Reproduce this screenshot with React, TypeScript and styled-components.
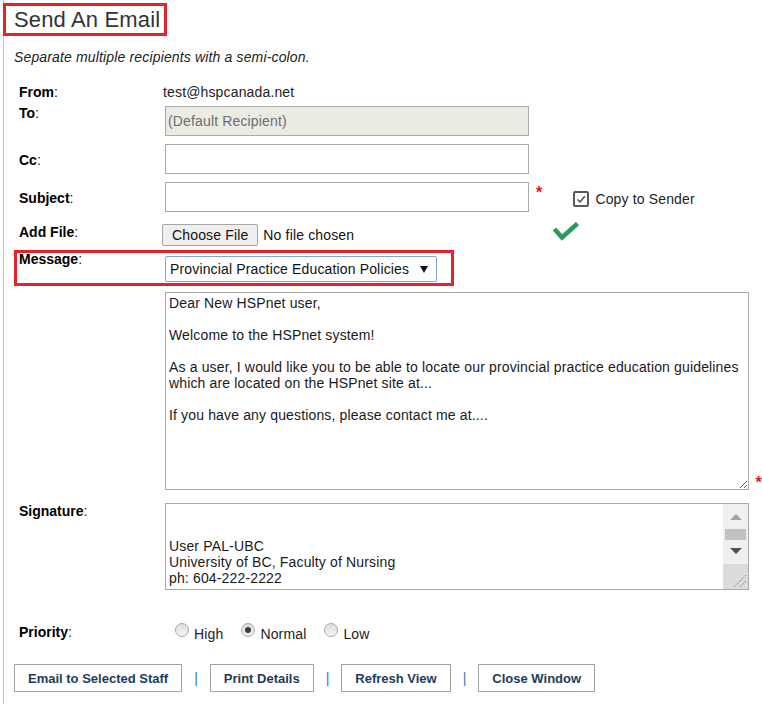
import React from "react";
import styled, { createGlobalStyle } from "styled-components";

const GlobalStyle = createGlobalStyle`
  html {
    min-height: 100%;
    background: linear-gradient(to right, #fff 3px, #c3c3c3 3px, #c3c3c3 4px, #fff 4px);
  }
  body {
    margin: 0;
    font-family: "Liberation Sans", Arial, sans-serif;
    font-size: 14px;
    letter-spacing: 0.15px;
    color: #111;
  }
`;

const MESSAGE = `Dear New HSPnet user,

Welcome to the HSPnet system!

As a user, I would like you to be able to locate our provincial practice education guidelines
which are located on the HSPnet site at...

If you have any questions, please contact me at....`;

const SIGNATURE = `

User PAL-UBC
University of BC, Faculty of Nursing
ph: 604-222-2222`;

export default function App() {
  return (
    <>
      <GlobalStyle />
      <Page>
        <TitleBox>Send An Email</TitleBox>
        <Note>Separate multiple recipients with a semi-colon.</Note>

        <Form>
          <Row $mt={0}>
            <Label>
              <b>From</b>:
            </Label>
            <Value>test@hspcanada.net</Value>
          </Row>

          <Row $mt={6}>
            <Label $mt={-1}>
              <b>To</b>:
            </Label>
            <TextInput $disabled readOnly value="(Default Recipient)" />
          </Row>

          <Row $mt={8}>
            <Label $mt={8}>
              <b>Cc</b>:
            </Label>
            <TextInput readOnly value="" />
          </Row>

          <Row $mt={8}>
            <Label $mt={8}>
              <b>Subject</b>:
            </Label>
            <TextInput readOnly value="" />
            <Required $ml={7} $mt={3}>*</Required>
            <CopyOption>
              <CheckBox>
                <svg width="12" height="12" viewBox="0 0 12 12">
                  <path d="M2.5 6.5 L5 9 L9.8 3.2" fill="none" stroke="#4a4a4a" strokeWidth="1.5" />
                </svg>
              </CheckBox>
              <span>Copy to Sender</span>
            </CopyOption>
          </Row>

          <Row $mt={12}>
            <Label>
              <b>Add File</b>:
            </Label>
            <FileGroup>
              <FileButton>Choose File</FileButton>
              <FileStatus>No file chosen</FileStatus>
            </FileGroup>
            <GreenCheck width="26" height="19" viewBox="0 0 26 19">
              <path d="M1.5 7 L9 15.5 L24.5 1.5" fill="none" stroke="#2c9a5b" strokeWidth="4.5" />
            </GreenCheck>
          </Row>

          <HighlightRow>
            <Label $mt={-2}>
              <b>Message</b>:
            </Label>
            <SelectBox>
              <span>Provincial Practice Education Policies</span>
              <svg width="8" height="7" viewBox="0 0 8 7">
                <path d="M0 0 H8 L4 7 Z" fill="#111" />
              </svg>
            </SelectBox>
          </HighlightRow>

          <Row $mt={6}>
            <Label />
            <MessageArea readOnly value={MESSAGE} />
            <Required $ml={7} $mt={0} $end>
              *
            </Required>
          </Row>

          <Row $mt={13}>
            <Label>
              <b>Signature</b>:
            </Label>
            <SigBox>
              <SigText>{SIGNATURE}</SigText>
              <ScrollColumn>
                <ScrollTrack>
                  <svg width="25" height="60" viewBox="0 0 25 60">
                    <path d="M7 16 L19 16 L13 10 Z" fill="#a3a3a3" />
                    <rect x="2" y="25" width="21" height="11" fill="#c1c1c1" />
                    <path d="M7 44 L19 44 L13 50 Z" fill="#505050" />
                  </svg>
                </ScrollTrack>
                <ScrollCorner>
                  <svg width="25" height="25" viewBox="0 0 25 25">
                    <path d="M23 11 L11 23 M23 17 L17 23" stroke="#8a8a8a" strokeWidth="1" strokeDasharray="1.5 0.8" />
                  </svg>
                </ScrollCorner>
              </ScrollColumn>
            </SigBox>
          </Row>

          <Row $mt={32}>
            <Label $mt={2}>
              <b>Priority</b>:
            </Label>
            <RadioGroup>
              <Option>
                <Radio />
                <OptionText>High</OptionText>
              </Option>
              <Option>
                <Radio $checked />
                <OptionText>Normal</OptionText>
              </Option>
              <Option>
                <Radio />
                <OptionText>Low</OptionText>
              </Option>
            </RadioGroup>
          </Row>
        </Form>

        <ButtonBar>
          <ActionButton>Email to Selected Staff</ActionButton>
          <Separator>|</Separator>
          <ActionButton>Print Details</ActionButton>
          <Separator>|</Separator>
          <ActionButton>Refresh View</ActionButton>
          <Separator>|</Separator>
          <ActionButton>Close Window</ActionButton>
        </ButtonBar>
      </Page>
    </>
  );
}

// style
const Page = styled.div`
  width: 762px;
  height: 704px;
  padding-top: 3px;
  box-sizing: border-box;
  overflow: hidden;
`;

const TitleBox = styled.div`
  width: fit-content;
  margin-left: 3px;
  border: 3px solid #e5222b;
  padding: 0 4px 0 8px;
  font-size: 22px;
  line-height: 27px;
  color: #333;
`;

const Note = styled.div`
  margin: 13px 0 0 14px;
  font-style: italic;
  line-height: 16px;
  color: #222;
`;

const Form = styled.div`
  margin-top: 19px;
`;

const Row = styled.div<{ $mt: number }>`
  display: flex;
  align-items: flex-start;
  margin-top: ${(p) => p.$mt}px;
  padding-left: 19px;
`;

const Label = styled.div<{ $mt?: number }>`
  width: 146px;
  flex-shrink: 0;
  margin-top: ${(p) => p.$mt ?? 0}px;
  line-height: 16px;
  letter-spacing: 0;
  color: #222;

  b {
    font-weight: 700;
    color: #000;
  }
`;

const Value = styled.div`
  margin-left: -2px;
  line-height: 16px;
  color: #222;
`;

const TextInput = styled.input<{ $disabled?: boolean }>`
  width: 364px;
  height: 30px;
  margin: 0;
  box-sizing: border-box;
  border: 1px solid #a9a9a9;
  border-radius: 0;
  padding: 0 2px;
  background: ${(p) => (p.$disabled ? "#ebebe4" : "#fff")};
  font: 14px "Liberation Sans", Arial, sans-serif;
  letter-spacing: 0.15px;
  color: #6d6d6d;
  outline: none;
`;

const Required = styled.span<{ $ml: number; $mt: number; $end?: boolean }>`
  align-self: ${(p) => (p.$end ? "flex-end" : "flex-start")};
  margin-left: ${(p) => p.$ml}px;
  margin-top: ${(p) => p.$mt}px;
  margin-bottom: ${(p) => (p.$end ? -1 : 0)}px;
  font-size: 16px;
  font-weight: 700;
  line-height: 16px;
  color: #ee1111;
`;

const CopyOption = styled.label`
  display: flex;
  align-items: center;
  gap: 6px;
  margin: 9px 0 0 31px;
  line-height: 16px;
  color: #222;
`;

const CheckBox = styled.span`
  display: flex;
  align-items: center;
  justify-content: center;
  width: 16px;
  height: 16px;
  box-sizing: border-box;
  border: 2px solid #5a5a5a;
  border-radius: 2px;
  background: #fff;
`;

const FileGroup = styled.div`
  display: flex;
  align-items: center;
  width: 391px;
  margin-left: -3px;
  flex-shrink: 0;
`;

const FileButton = styled.span`
  height: 22px;
  box-sizing: border-box;
  padding: 0 9px;
  border: 1px solid #a6a6a6;
  border-radius: 2px;
  background: #efefef;
  line-height: 20px;
  color: #111;
`;

const FileStatus = styled.span`
  margin-left: 5px;
  color: #111;
`;

const GreenCheck = styled.svg`
  margin-top: -2px;
`;

const HighlightRow = styled.div`
  display: flex;
  align-items: flex-start;
  width: 440px;
  height: 36px;
  box-sizing: border-box;
  margin: 4px 0 0 14px;
  padding-left: 2px;
  border: 3px solid #e5222b;
`;

const SelectBox = styled.div`
  display: flex;
  align-items: center;
  justify-content: space-between;
  width: 272px;
  height: 26px;
  margin-top: 3px;
  box-sizing: border-box;
  padding: 0 8px 0 4px;
  border: 1px solid #7fa5d6;
  border-radius: 2px;
  background: #fff;
  color: #111;
`;

const MessageArea = styled.textarea`
  display: block;
  width: 584px;
  height: 198px;
  margin: 0;
  box-sizing: border-box;
  padding: 2px 3px;
  border: 1px solid #a9a9a9;
  border-radius: 0;
  font: 14px/16px "Liberation Sans", Arial, sans-serif;
  letter-spacing: 0.15px;
  color: #1a1a1a;
  resize: both;
  overflow: hidden;
  outline: none;
`;

const SigBox = styled.div`
  display: flex;
  width: 584px;
  height: 87px;
  box-sizing: border-box;
  border: 1px solid #a9a9a9;
`;

const SigText = styled.div`
  flex: 1;
  padding: 2px 3px;
  white-space: pre;
  line-height: 16px;
  color: #1a1a1a;
  overflow: hidden;
`;

const ScrollColumn = styled.div`
  display: flex;
  flex-direction: column;
  width: 25px;
`;

const ScrollTrack = styled.div`
  height: 60px;
  background: #f0f0f0;
  line-height: 0;
`;

const ScrollCorner = styled.div`
  height: 25px;
  background: #dcdcdc;
  line-height: 0;
`;

const RadioGroup = styled.div`
  display: flex;
  gap: 18px;
  height: 20px;
  margin-left: 10px;
`;

const Option = styled.label`
  display: flex;
  align-items: flex-start;
  gap: 5px;
`;

const Radio = styled.span<{ $checked?: boolean }>`
  display: flex;
  align-items: center;
  justify-content: center;
  width: 14px;
  height: 14px;
  margin-top: 1px;
  box-sizing: border-box;
  border: 1px solid #a8a8a8;
  border-radius: 50%;
  background: linear-gradient(#dcdcdc, #f4f4f4);

  &::after {
    content: "";
    display: ${(p) => (p.$checked ? "block" : "none")};
    width: 6px;
    height: 6px;
    border-radius: 50%;
    background: #3d3d3d;
  }
`;

const OptionText = styled.span`
  margin-top: 4px;
  line-height: 16px;
  color: #222;
`;

const ButtonBar = styled.div`
  display: flex;
  align-items: center;
  gap: 12px;
  margin: 22px 0 0 14px;
  letter-spacing: 0;
`;

const ActionButton = styled.button`
  height: 28px;
  margin: 0;
  box-sizing: border-box;
  padding: 0 13px;
  border: 1px solid #a3a3a3;
  border-radius: 0;
  background: #fff;
  font: 700 13px "Liberation Sans", Arial, sans-serif;
  color: #1d3c5c;
`;

const Separator = styled.span`
  font-size: 14px;
  color: #2b7cc0;
`;
